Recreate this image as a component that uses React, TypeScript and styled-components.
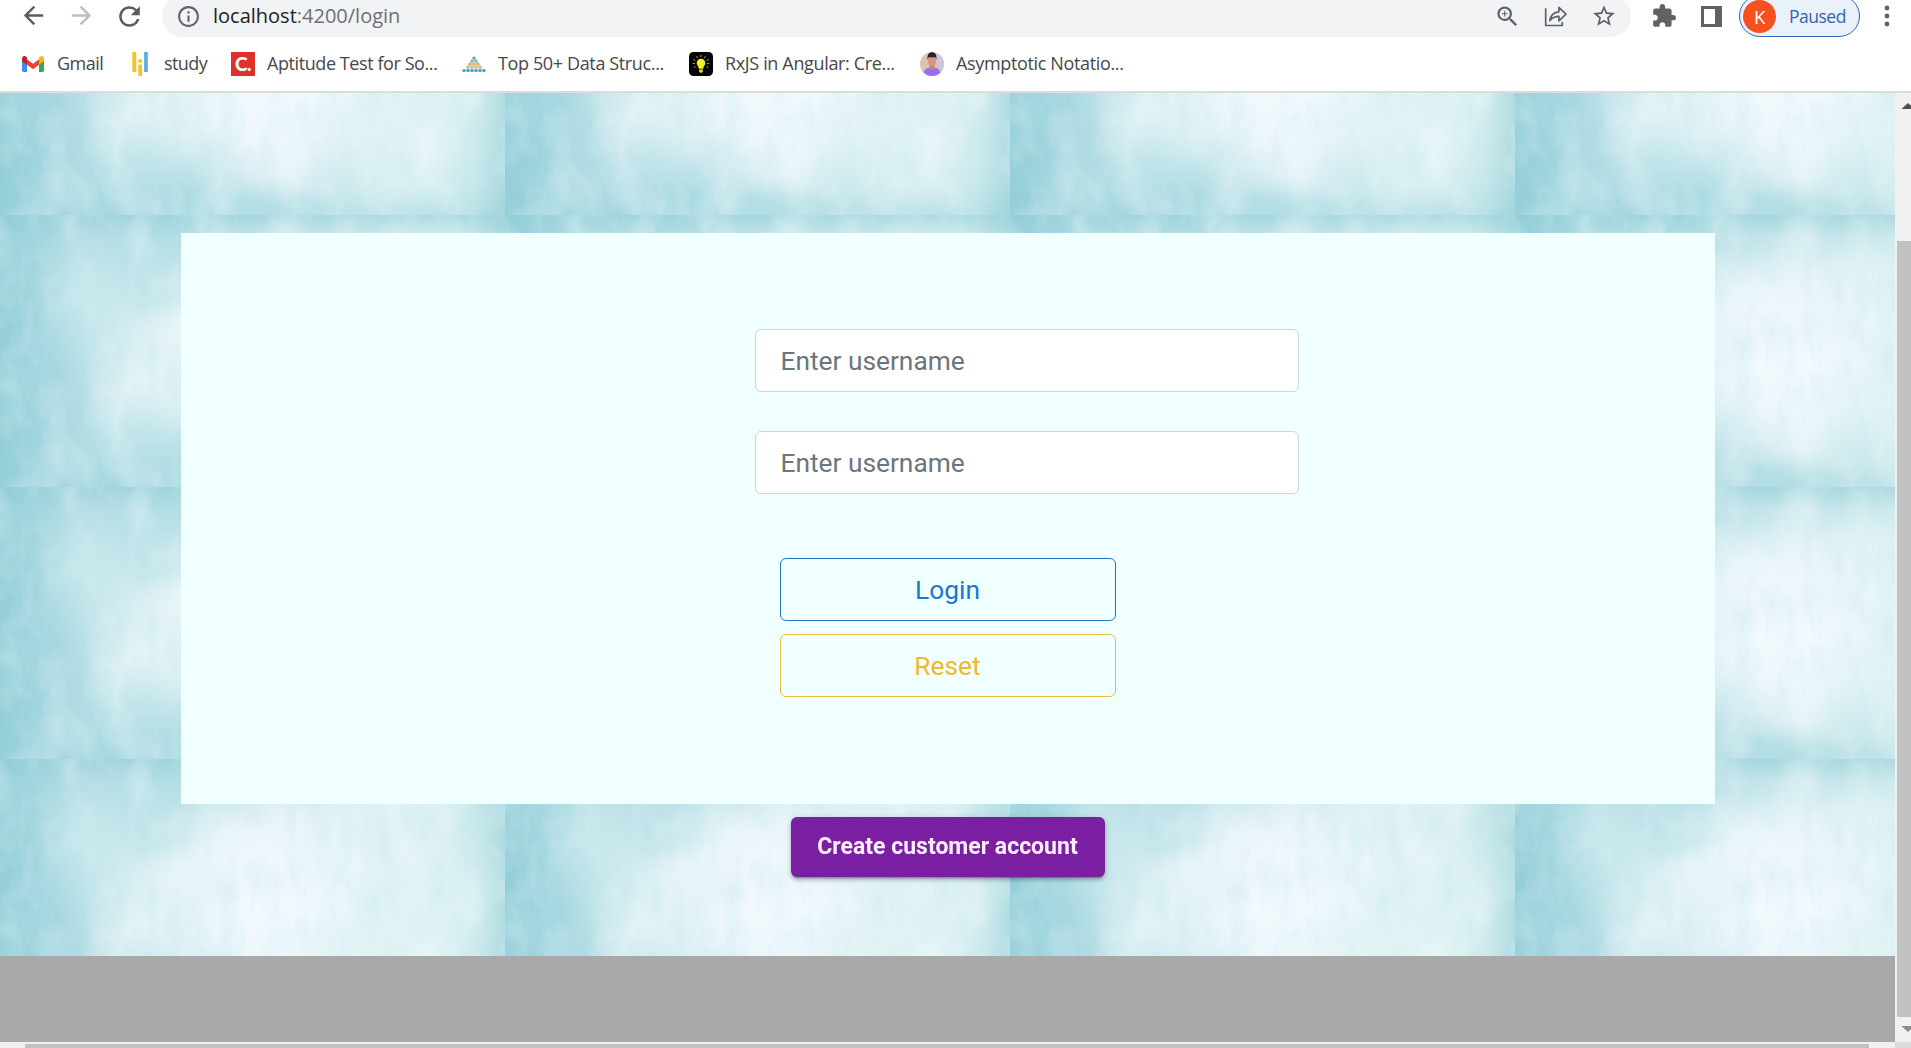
import React from "react";
import styled, { createGlobalStyle } from "styled-components";
import {
  MdArrowBack,
  MdArrowForward,
  MdRefresh,
  MdInfoOutline,
  MdZoomIn,
  MdStarBorder,
  MdExtension,
} from "react-icons/md";

const GlobalStyle = createGlobalStyle`
  * { box-sizing: border-box; }
  html, body { margin: 0; padding: 0; overflow: hidden; }
`;

const Browser = styled.div`
  width: 1911px;
  height: 1048px;
  display: flex;
  flex-direction: column;
  overflow: hidden;
  background: #fff;
  font-family: "Open Sans", "Noto Sans", sans-serif;
`;

const Toolbar = styled.header`
  height: 42px;
  margin-top: -5px;
  flex: none;
  display: flex;
  align-items: center;
  color: #5f6368;
  svg { display: block; flex: none; }
`;

const NavButton = styled.span<{ $dim?: boolean }>`
  width: 48px;
  display: flex;
  justify-content: center;
  color: ${(p) => (p.$dim ? "#bcbec0" : "#5a5d61")};
`;

const NavGroup = styled.nav`
  display: flex;
  padding-left: 9px;
  width: 162px;
`;

const AddressBar = styled.div`
  width: 1469px;
  height: 42px;
  flex: none;
  border-radius: 21px;
  background: #f1f3f4;
  display: flex;
  align-items: center;
  padding: 0 14px 0 14px;
`;

const Url = styled.span`
  margin-left: 12px;
  flex: 1;
  font-size: 20px;
  line-height: 28px;
  letter-spacing: 0;
  color: #6c7074;
  b { font-weight: 400; color: #202124; }
`;

const AddressActions = styled.div`
  display: flex;
  align-items: center;
  gap: 23px;
`;

const ExtensionActions = styled.div`
  display: flex;
  align-items: center;
  flex: none;
  width: 108px;
  padding-left: 20px;
  gap: 24px;
`;

const ProfilePill = styled.div`
  width: 121px;
  height: 42px;
  flex: none;
  border: 1.5px solid #3468b8;
  border-radius: 21px;
  background: #e9f1fb;
  display: flex;
  align-items: center;
  gap: 13px;
  padding-left: 3px;
  color: #3563ad;
  font-size: 17.5px;
  letter-spacing: -0.5px;
`;

const Avatar = styled.span`
  width: 33px;
  height: 33px;
  border-radius: 50%;
  background: #f4511e;
  color: #fff;
  display: grid;
  place-items: center;
  font-size: 18.5px;
`;

const MenuDots = styled.div`
  width: 51px;
  flex: none;
  display: flex;
  justify-content: center;
  padding-left: 2px;
`;

const Bookmarks = styled.div`
  height: 54px;
  flex: none;
  padding-left: 21px;
  display: grid;
  grid-template-columns: 107px 103px 231px 227px 231px 260px;
  align-items: center;
`;

const Bookmark = styled.span`
  display: flex;
  align-items: center;
  gap: 12px;
  white-space: nowrap;
  svg { flex: none; }
`;

const BookmarkLabel = styled.span<{ $track: number }>`
  font-size: 18px;
  line-height: 24px;
  padding-bottom: 2px;
  letter-spacing: ${(p) => p.$track}px;
  color: #45484c;
`;

const Viewport = styled.div`
  flex: 1;
  min-height: 0;
  border-top: 2px solid #d9dddd;
  display: grid;
  grid-template-columns: 1895px 16px;
  grid-template-rows: 949px 6px;
`;

const Page = styled.main`
  position: relative;
  overflow: hidden;
  display: flex;
  flex-direction: column;
  align-items: center;
  padding-top: 140px;
  font-family: Roboto, sans-serif;
`;

const Backdrop = styled.svg`
  position: absolute;
  inset: 0;
`;

const LoginPanel = styled.form`
  position: relative;
  width: 1534px;
  height: 571px;
  flex: none;
  background: #f0ffff;
  padding: 96px 416px 0 574px;
`;

const Field = styled.input`
  display: block;
  width: 544px;
  height: 63px;
  margin-bottom: 39px;
  border: 1px solid #ced4da;
  border-radius: 6px;
  background: #fff;
  padding: 0 25px;
  font: 400 26.3px/40px Roboto, sans-serif;
  outline: none;
  &::placeholder { color: #6c757d; opacity: 1; }
`;

const Actions = styled.div`
  padding: 25px 0 0 25px;
  display: flex;
  flex-direction: column;
  gap: 13px;
`;

const OutlineButton = styled.button<{ $border: string; $color: string }>`
  width: 336px;
  height: 63px;
  padding: 0;
  border: 1px solid ${(p) => p.$border};
  border-radius: 6px;
  background: transparent;
  color: ${(p) => p.$color};
  font: 400 26.3px/40px Roboto, sans-serif;
`;

const CreateButton = styled.button`
  position: relative;
  margin-top: 13px;
  width: 314px;
  height: 60px;
  flex: none;
  border: 0;
  border-radius: 6px;
  background: #7b1fa2;
  color: #fdeeff;
  font: 700 23px/36px Roboto, sans-serif;
  box-shadow: 0 3px 2px -2px rgba(0, 0, 0, 0.3), 0 3px 4px rgba(0, 0, 0, 0.2), 0 1px 7px rgba(0, 0, 0, 0.14);
`;

const Footer = styled.footer`
  position: relative;
  width: 100%;
  height: 86px;
  margin-top: auto;
  background: #a9a9a9;
`;

const VerticalTrack = styled.div`
  background: #f1f1f1;
  display: flex;
  flex-direction: column;
  align-items: flex-end;
  svg { display: block; }
`;

const VerticalThumb = styled.div`
  width: 14px;
  height: 776px;
  margin: 132px 0 9px;
  background: #c1c1c1;
`;

const HorizontalTrack = styled.div`
  background: #f1f1f1;
  padding: 2px 26px 0 25px;
`;

const HorizontalThumb = styled.div`
  height: 4px;
  background: #c1c1c1;
`;

const Corner = styled.div`
  background: #dcdcdc;
`;

const ShareIcon = () => (
  <svg width="24" height="24" viewBox="0 0 24 24" fill="none" stroke="currentColor" strokeWidth="1.7">
    <path d="M1.7 4.2v17.3h16.6v-3.6" />
    <path d="M5.8 16.7C6.6 11 9.6 8.1 14.9 7.8V3.3l7.1 6.8-7.1 6.7v-4.4c-4.2 0-6.900 1.300-9.100 4.300z" strokeLinejoin="round" />
  </svg>
);

const SidePanelIcon = () => (
  <svg width="21" height="21" viewBox="0 0 21 21">
    <path fillRule="evenodd" fill="#5f6368" d="M0 0h21v21H0zM3 3v15h11V3z" />
  </svg>
);

const GmailLogo = () => (
  <svg width="24" height="24" viewBox="0 0 24 24">
    <path d="M1 8v10.300q0 1.700 1.700 1.700H6V11z" fill="#4285f4" />
    <path d="M18 11v9h3.300q1.700 0 1.700-1.700V8z" fill="#34a853" />
    <path d="M6 7.200 12 11.700l6-4.500v5.600l-6 4.500-6-4.500z" fill="#ea4335" />
    <path d="M1 6.500C1 4.200 3.500 3.400 5 4.600l1 .8v7.400L1 9z" fill="#c5221f" />
    <path d="M23 6.500c0-2.300-2.500-3.100-4-1.900l-1 .8v7.400L23 9z" fill="#fbbc04" />
  </svg>
);

const StudyLogo = () => (
  <svg width="24" height="24" viewBox="0 0 24 24">
    <g fill="#f4c430">
      <path d="M4.300 0h4v20h-4zM10.300 7.300h3.800v3.500h-3.800zM10.300 12.600h3.800V24h-3.800z" />
    </g>
    <path d="M16.100 0h3.700v20h-3.700z" fill="#5aaee0" />
  </svg>
);

const CLogoBox = styled.span`
  width: 24px;
  height: 24px;
  flex: none;
  background: #e0302a;
  color: #fff;
  display: grid;
  place-items: center;
  font: 900 19px/24px Lato, "Liberation Sans", sans-serif;
  letter-spacing: -0.5px;
`;

const PyramidLogo = () => {
  const rows = [
    { n: 1, y: 6, c: "#4aa3b8" },
    { n: 2, y: 9, c: "#7fb5b0" },
    { n: 3, y: 12, c: "#e2a85c" },
    { n: 4, y: 15, c: "#dfb477" },
    { n: 6, y: 18.500, c: "#3f9fb4" },
  ];
  return (
    <svg width="24" height="24" viewBox="0 0 24 24">
      <path d="M12 4 .5 20h23z" fill="#b9d8da" opacity=".6" />
      {rows.map((r) =>
        Array.from({ length: r.n }, (_, i) => (
          <circle key={`${r.y}-${i}`} cx={12 + (i - (r.n - 1) / 2) * 4} cy={r.y} r="1.600" fill={r.c} />
        ))
      )}
    </svg>
  );
};

const BulbLogo = () => (
  <svg width="24" height="24" viewBox="0 0 24 24">
    <rect width="24" height="24" rx="4.500" fill="#050505" />
    <path d="M12 6.800a4.300 4.300 0 0 0-4.300 4.300c0 2.400 1.900 3.200 2.100 5.700h4.400c.2-2.500 2.100-3.300 2.100-5.700A4.300 4.300 0 0 0 12 6.800z" fill="#fdf020" />
    <path d="M10.200 17.600h3.600v1.700l-1 1.500h-1.600l-1-1.500z" fill="#e8dc50" />
    <path
      d="M12 3v2M7.600 4.300l1 1.700M16.400 4.300l-1 1.700M4.500 7.500l1.700 1M19.500 7.500l-1.700 1M3.800 11.500h1.900M20.200 11.500h-1.900M4.800 15.500l1.600-.9M19.200 15.500l-1.600-.9"
      stroke="#d8c71c"
      strokeWidth=".9"
    />
  </svg>
);

const PortraitLogo = () => (
  <svg width="24" height="24" viewBox="0 0 24 24">
    <clipPath id="portrait"><circle cx="12" cy="12" r="12" /></clipPath>
    <g clipPath="url(#portrait)">
      <rect width="24" height="24" fill="#dcc3b4" />
      <path d="M15 2h9v20h-5z" fill="#cfc6dc" />
      <path d="M3 24c0-6 3-8.500 9-8.500s9 2.500 9 8.500z" fill="#9a6df0" />
      <path d="M9.500 12h5v4.500L12 18.500l-2.500-2z" fill="#c78374" />
      <ellipse cx="12" cy="8.800" rx="4" ry="5.400" fill="#d99584" />
      <path d="M7.600 8C7 2.500 9 .3 12 .3S17 2.500 16.400 8L15.500 5.200h-7z" fill="#2b2028" />
    </g>
  </svg>
);

const TILE_W = 505;
const TILE_H = 272;
const TILE_COLUMNS = [0, 1, 2, 3];
const TILE_ROWS = [-150, 122, 394, 666];

/* Repeating watercolour wash: a pale cloud on teal paper, with a fine grain. */
const Watercolour = () => (
  <Backdrop width="1895" height="949" viewBox="0 0 1895 949" aria-hidden="true">
    <defs>
      <linearGradient id="wash" x1="0" x2="1" y1="0" y2="0">
        <stop offset="0" stopColor="#94cfd9" />
        <stop offset=".07" stopColor="#9fd4de" />
        <stop offset=".14" stopColor="#addae2" />
        <stop offset=".4" stopColor="#b3dee4" />
        <stop offset=".7" stopColor="#bfe3e7" />
        <stop offset=".94" stopColor="#c1e5e8" />
        <stop offset="1" stopColor="#a9d9df" />
      </linearGradient>
      <linearGradient id="edge" x1="0" x2="0" y1="0" y2="1">
        <stop offset="0" stopColor="#8ccbd6" stopOpacity=".45" />
        <stop offset=".08" stopColor="#8ccbd6" stopOpacity="0" />
        <stop offset=".9" stopColor="#8ccbd6" stopOpacity="0" />
        <stop offset="1" stopColor="#8ccbd6" stopOpacity=".25" />
      </linearGradient>
      <filter id="soft" x="-40%" y="-40%" width="180%" height="180%">
        <feGaussianBlur stdDeviation="24" />
      </filter>
      <filter id="softer" x="-60%" y="-60%" width="220%" height="220%">
        <feGaussianBlur stdDeviation="9" />
      </filter>
      <filter id="cloud" x="0" y="0" width="100%" height="100%">
        <feTurbulence type="fractalNoise" baseFrequency="0.022 0.014" numOctaves="4" seed="21" />
        <feColorMatrix values="0 0 0 0 .95  0 0 0 0 .98  0 0 0 0 1  2.400 0 0 0 -1.050" />
      </filter>
      <filter id="shade" x="0" y="0" width="100%" height="100%">
        <feTurbulence type="fractalNoise" baseFrequency="0.05 0.02" numOctaves="4" seed="5" />
        <feColorMatrix values="0 0 0 0 .55  0 0 0 0 .8  0 0 0 0 .84  0 2.200 0 0 -1" />
      </filter>
      <clipPath id="tileClip"><rect width={TILE_W} height={TILE_H} /></clipPath>
      <g id="tile" clipPath="url(#tileClip)">
        <rect width={TILE_W} height={TILE_H} fill="url(#wash)" />
        <g filter="url(#soft)">
          <ellipse cx="280" cy="130" rx="145" ry="92" fill="#eef7fb" />
          <ellipse cx="400" cy="145" rx="80" ry="130" fill="#dff2f4" />
          <ellipse cx="160" cy="155" rx="58" ry="62" fill="#e0f2f5" />
          <ellipse cx="275" cy="210" rx="42" ry="50" fill="#eaf6fa" />
          <ellipse cx="95" cy="80" rx="38" ry="50" fill="#cbe9ed" />
        </g>
        <g filter="url(#softer)">
          <ellipse cx="165" cy="86" rx="26" ry="8" fill="#a9dbe2" opacity=".8" />
          <ellipse cx="35" cy="145" rx="20" ry="36" fill="#98d1dd" opacity=".6" />
          <ellipse cx="210" cy="258" rx="80" ry="9" fill="#a3d7e0" opacity=".6" />
          <ellipse cx="260" cy="165" rx="50" ry="38" fill="#f1f8fd" opacity=".7" />
          <ellipse cx="320" cy="145" rx="40" ry="20" fill="#f1f8fd" opacity=".7" />
        </g>
        <rect width={TILE_W} height={TILE_H} fill="url(#edge)" />
        <rect width={TILE_W} height={TILE_H} filter="url(#cloud)" opacity=".4" />
        <rect width={TILE_W} height={TILE_H} filter="url(#shade)" opacity=".38" />
      </g>
    </defs>
    {TILE_ROWS.map((y) =>
      TILE_COLUMNS.map((c) => <use key={`${c}-${y}`} href="#tile" x={c * TILE_W} y={y} />)
    )}
  </Backdrop>
);

const bookmarks = [
  { label: "Gmail", track: -0.5, icon: <GmailLogo /> },
  { label: "study", track: -0.6, icon: <StudyLogo /> },
  { label: "Aptitude Test for So...", track: -0.42, icon: <CLogoBox>C.</CLogoBox> },
  { label: "Top 50+ Data Struc...", track: -0.37, icon: <PyramidLogo /> },
  { label: "RxJS in Angular: Cre...", track: -0.35, icon: <BulbLogo /> },
  { label: "Asymptotic Notatio...", track: -0.35, icon: <PortraitLogo /> },
];

export default function App() {
  return (
    <Browser>
      <GlobalStyle />
      <Toolbar>
        <NavGroup>
          <NavButton><MdArrowBack size={29} /></NavButton>
          <NavButton $dim><MdArrowForward size={29} /></NavButton>
          <NavButton><MdRefresh size={31} /></NavButton>
        </NavGroup>
        <AddressBar>
          <MdInfoOutline size={25} />
          <Url><b>localhost</b>:4200/login</Url>
          <AddressActions>
            <MdZoomIn size={27} />
            <ShareIcon />
            <MdStarBorder size={26} />
          </AddressActions>
        </AddressBar>
        <ExtensionActions>
          <MdExtension size={26} />
          <SidePanelIcon />
        </ExtensionActions>
        <ProfilePill>
          <Avatar>K</Avatar>
          Paused
        </ProfilePill>
        <MenuDots>
          <svg width="6" height="22" viewBox="0 0 6 22" fill="#5f6368">
            <circle cx="3" cy="3" r="2.400" />
            <circle cx="3" cy="11" r="2.400" />
            <circle cx="3" cy="19" r="2.400" />
          </svg>
        </MenuDots>
      </Toolbar>
      <Bookmarks>
        {bookmarks.map((b) => (
          <Bookmark key={b.label}>
            {b.icon}
            <BookmarkLabel $track={b.track}>{b.label}</BookmarkLabel>
          </Bookmark>
        ))}
      </Bookmarks>
      <Viewport>
        <Page>
          <Watercolour />
          <LoginPanel>
            <Field placeholder="Enter username" />
            <Field placeholder="Enter username" />
            <Actions>
              <OutlineButton type="button" $border="#1f78c4" $color="#1976d2">Login</OutlineButton>
              <OutlineButton type="button" $border="#e8bf3c" $color="#f2b72f">Reset</OutlineButton>
            </Actions>
          </LoginPanel>
          <CreateButton type="button">Create customer account</CreateButton>
          <Footer />
        </Page>
        <VerticalTrack>
          <svg width="16" height="16" viewBox="0 0 16 16"><path d="M6.500 16 13 10l6.500 6z" fill="#505050" /></svg>
          <VerticalThumb />
          <svg width="16" height="16" viewBox="0 0 16 16"><path d="M6.500 0 13 6l6.500-6z" fill="#8c8c8c" /></svg>
        </VerticalTrack>
        <HorizontalTrack><HorizontalThumb /></HorizontalTrack>
        <Corner />
      </Viewport>
    </Browser>
  );
}
